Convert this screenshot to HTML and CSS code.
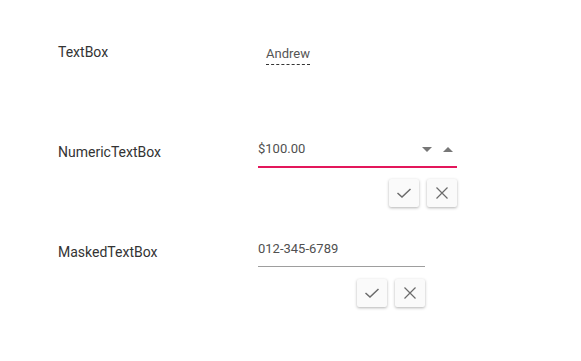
FILE: index.html
```html
<!DOCTYPE html>
<html lang="en">

<head>
    <meta charset="UTF-8">
    <meta name="viewport" content="width=device-width, initial-scale=1.0">
    <title>In-place Editor</title>
    <link rel="stylesheet" href="styles.css">
</head>

<body>
    <div class="editor-list">
        <div class="row">
            <div class="label">TextBox</div>
            <div class="field">
                <span class="inplace-value">Andrew</span>
            </div>
        </div>

        <div class="row">
            <div class="label">NumericTextBox</div>
            <div class="field numeric">
                <div class="editor focused">
                    <span class="value">$100.00</span>
                    <span class="spin">
                        <span class="arrow down"></span>
                        <span class="arrow up"></span>
                    </span>
                </div>
                <div class="actions">
                    <button class="action-btn" title="Save">
                        <svg width="18" height="18" viewBox="0 0 18 18">
                            <path d="M2.5 9 L7 13 L15.5 5" fill="none" stroke="#6b6b6b" stroke-width="1.5" />
                        </svg>
                    </button>
                    <button class="action-btn" title="Cancel">
                        <svg width="16" height="16" viewBox="0 0 16 16">
                            <path d="M2.5 2.5 L13.5 13.5 M13.5 2.5 L2.5 13.5" fill="none" stroke="#6b6b6b" stroke-width="1.2" />
                        </svg>
                    </button>
                </div>
            </div>
        </div>

        <div class="row">
            <div class="label">MaskedTextBox</div>
            <div class="field masked">
                <div class="editor">
                    <span class="value">012-345-6789</span>
                </div>
                <div class="actions">
                    <button class="action-btn" title="Save">
                        <svg width="18" height="18" viewBox="0 0 18 18">
                            <path d="M2.5 9 L7 13 L15.5 5" fill="none" stroke="#6b6b6b" stroke-width="1.5" />
                        </svg>
                    </button>
                    <button class="action-btn" title="Cancel">
                        <svg width="16" height="16" viewBox="0 0 16 16">
                            <path d="M2.5 2.5 L13.5 13.5 M13.5 2.5 L2.5 13.5" fill="none" stroke="#6b6b6b" stroke-width="1.2" />
                        </svg>
                    </button>
                </div>
            </div>
        </div>
    </div>
</body>

</html>
```

FILE: styles.css
```css
body {
    margin: 0;
    font-family: Roboto, "Noto Sans", Arial, sans-serif;
    background-color: #fff;
    color: #333;
}

.editor-list {
    padding: 40px 0 0 58px;
}

.row {
    display: flex;
    height: 100px;
}

.label {
    width: 200px;
    font-size: 14px;
    line-height: 24px;
}

.inplace-value {
    display: inline-block;
    margin: 4px 0 0 8px;
    font-size: 13px;
    line-height: 20px;
    color: #555;
    border-bottom: 1px dashed #333;
}

.field {
    display: flex;
    flex-direction: column;
}

.numeric {
    width: 199px;
}

.masked {
    width: 167px;
}

.editor {
    display: flex;
    align-items: center;
    margin-top: -2px;
    padding-bottom: 6px;
    line-height: 22px;
    font-size: 13px;
    color: #505050;
    border-bottom: 1px solid #9e9e9e;
}

.editor.focused {
    border-bottom: 2px solid #e3165b;
}

.value {
    flex: 1;
}

.spin {
    display: flex;
    gap: 11px;
    margin-right: 4px;
}

.arrow {
    width: 0;
    height: 0;
    border-left: 5px solid transparent;
    border-right: 5px solid transparent;
}

.arrow.down {
    border-top: 5px solid #777;
}

.arrow.up {
    border-bottom: 5px solid #777;
}

.actions {
    display: flex;
    justify-content: flex-end;
    gap: 8px;
    margin-top: 12px;
}

.numeric .actions {
    margin-top: 11px;
}

.action-btn {
    display: flex;
    align-items: center;
    justify-content: center;
    width: 30px;
    height: 28px;
    padding: 0;
    border: none;
    border-radius: 2px;
    background-color: #fafafa;
    box-shadow: 0 1px 3px rgba(0, 0, 0, 0.3);
    cursor: pointer;
}
```
